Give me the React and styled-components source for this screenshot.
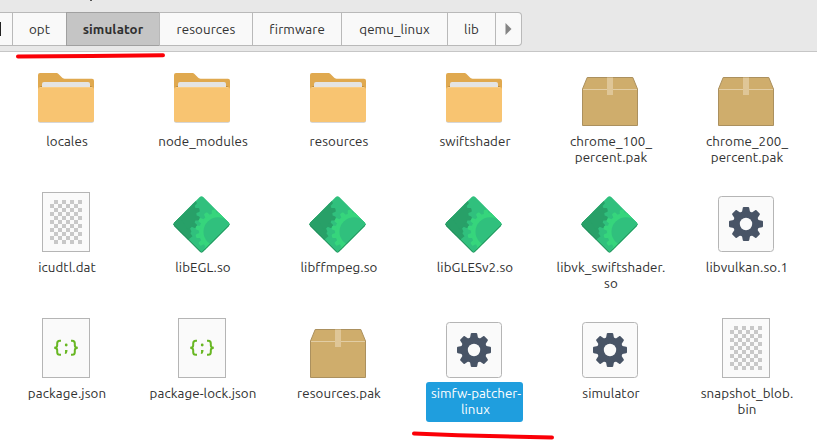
import React from 'react';
import styled, { createGlobalStyle } from 'styled-components';

const GlobalStyle = createGlobalStyle`
  * { box-sizing: border-box; }
  body {
    margin: 0;
    background: #fff;
    overflow: hidden;
    font-family: Ubuntu, "Noto Sans", sans-serif;
    font-size: 13.333px;
    letter-spacing: 0.1px;
    color: #303030;
  }
`;

const Window = styled.div`
  position: relative;
  width: 817px;
  height: 447px;
  overflow: hidden;
  background: #fff;
`;

const Toolbar = styled.header`
  height: 52px;
  padding-top: 12px;
  background: #e8e8e8;
  border-bottom: 1px solid #c6c6c6;
`;

const PathBar = styled.nav`
  display: flex;
  width: 522px;
  height: 34px;
  background: #f9f9f9;
  border: 1px solid #b9b9b9;
  border-left: 0;
  border-radius: 0 4px 4px 0;
`;

const Crumb = styled.div`
  display: flex;
  flex: none;
  align-items: center;
  justify-content: center;
  width: ${(p) => p.$width}px;
  margin: ${(p) => (p.$active ? '-1px 0' : '0')};
  border-left: 1px solid ${(p) => (p.$active ? '#a0a0a0' : '#b9b9b9')};
  border-top: ${(p) => (p.$active ? '1px solid #a0a0a0' : '0')};
  border-bottom: ${(p) => (p.$active ? '1px solid #a0a0a0' : '0')};
  background: ${(p) => (p.$active ? '#c5c5c5' : 'transparent')};
  font-weight: ${(p) => (p.$active ? 700 : 400)};
`;

const DriveEdge = styled.div`
  width: 12px;
  padding-top: 9px;

  &::before {
    content: '';
    display: block;
    width: 1px;
    height: 14px;
    background: #222;
  }
`;

const Files = styled.main`
  display: grid;
  grid-template-columns: repeat(6, 136px);
  grid-auto-rows: 126px;
  padding: 14px 0 0;
  margin-left: -2px;
`;

const File = styled.div`
  display: flex;
  flex-direction: column;
  align-items: center;
`;

const Label = styled.div`
  width: ${(p) => (p.$selected ? '97px' : 'auto')};
  margin-left: ${(p) => (p.$selected ? '1px' : '0')};
  padding: 4px 3px 4px 5px;
  border-radius: 3px;
  line-height: 16px;
  text-align: center;
  white-space: nowrap;
  letter-spacing: ${(p) => (p.$selected ? '0.02px' : 'inherit')};
  color: ${(p) => (p.$selected ? '#fff' : 'inherit')};
  background: ${(p) => (p.$selected ? '#1f9ede' : 'transparent')};
`;

const Line = styled.span`
  display: block;
`;

const Icon = styled.svg`
  display: block;
  flex: none;
  width: 64px;
  height: 64px;
`;

const Marks = styled.svg`
  position: absolute;
  inset: 0;
  width: 817px;
  height: 447px;
  pointer-events: none;
`;

const Folder = () => (
  <Icon viewBox="0 0 64 64">
    <path d="M6 56.8h52a2 2 0 0 0 2-2v-2H4v2a2 2 0 0 0 2 2z" fill="#c9c9c9" />
    <path d="M4 9a2 2 0 0 1 2-2h16c1.200 0 1.800.3 2.500 1l3.500 3.500c.7.700 1.300 1.200 2.500 1.200H58a2 2 0 0 1 2 2V25H4z" fill="#e0a94f" />
    <path d="M4 24c0-1.500 1-2.500 2.500-2.500h51c1.500 0 2.500 1 2.500 2.500v-1.500L57 20H7l-3 2.500z" fill="#b78a42" />
    <path d="M8 23v-5a2 2 0 0 1 2-2h44a2 2 0 0 1 2 2v5z" fill="#e4e4e4" />
    <rect x="4" y="21" width="56" height="35" rx="2" fill="#f8c471" />
    <path d="M6 21.500h52" stroke="#f9cd86" />
  </Icon>
);

const Package = () => (
  <Icon viewBox="0 0 64 64">
    <path d="M9.200 11.500h45.600L59.500 23v36.500h-55V23z" fill="#cfad6c" stroke="#ab905e" strokeLinejoin="round" />
    <path d="M5 23.500h54" stroke="#e2cda4" />
    <path d="M29 11h6v18h-6z" fill="#dfc697" />
    <path d="M29 11.500h6" stroke="#c4aa78" />
  </Icon>
);

const Page = () => (
  <rect x="8.500" y=".5" width="47" height="59" fill="#fafafa" stroke="#b5b5b5" />
);

const cells = Array.from({ length: 44 }, (_, i) => {
  const row = Math.floor(i / 4);
  return { x: 16 + (i % 4) * 8 + (row % 2 ? 0 : 4), y: 8 + row * 4 };
});

const Binary = () => (
  <Icon viewBox="0 0 64 64">
    <Page />
    {cells.map((c) => (
      <rect key={`${c.x}-${c.y}`} x={c.x} y={c.y} width="4" height="4" fill="#c8c8c8" />
    ))}
  </Icon>
);

const Json = () => (
  <Icon viewBox="0 0 64 64">
    <Page />
    <g fill="none" stroke="#68b723" strokeWidth="2">
      <path d="M27 22.800h-1.200c-1.800 0-2.600.8-2.600 2.500v2c0 1.700-.8 2.500-3 2.500 2.200 0 3 .8 3 2.500v2c0 1.700.8 2.500 2.600 2.500H27" />
      <path d="M37 22.800h1.200c1.800 0 2.600.8 2.600 2.500v2c0 1.700.8 2.500 3 2.500-2.200 0-3 .8-3 2.500v2c0 1.700-.8 2.500-2.600 2.500H37" />
    </g>
    <circle cx="32.200" cy="27" r="1.400" fill="#68b723" />
    <path d="M31 32h2.500c0 1.800-.5 3-1.500 4l-1.300-.6c.4-.9.500-1.900.3-3.400z" fill="#68b723" />
  </Icon>
);

const Gear = () => (
  <Icon viewBox="0 0 64 64">
    <rect x="4.500" y="4.500" width="55" height="55" rx="3" fill="#fafafa" stroke="#b5b5b5" />
    <g fill="#485466">
      {[0, 45, 90, 135, 180, 225, 270, 315].map((a) => (
        <path key={a} transform={`rotate(${a} 32 32)`} d="M27.800 21l1-5.200c.1-.5.400-.8.900-.8h4.600c.5 0 .8.300.9.800l1 5.200z" />
      ))}
      <circle cx="32" cy="32" r="13" />
    </g>
    <circle cx="32" cy="32" r="6.200" fill="#fafafa" />
  </Icon>
);

const teeth = Array.from({ length: 16 }, (_, i) => i * 22.5 + 11);

const Cog = ({ x, y, fill }) => (
  <g fill={fill} transform={`translate(${x} ${y})`}>
    <circle r="19" />
    {teeth.map((a) => (
      <path key={a} transform={`rotate(${a})`} d="M-2.700-18l.7-3.700q.2-.8 1-.8h2q.8 0 1 .8l.7 3.700z" />
    ))}
  </g>
);

const Library = ({ id }) => (
  <Icon viewBox="0 0 64 64">
    <defs>
      <clipPath id={id}>
        <rect x="11.500" y="11.500" width="41" height="41" rx="2.500" transform="rotate(45 32 32)" />
      </clipPath>
    </defs>
    <g transform="translate(-.5 .3)">
      <g clipPath={`url(#${id})`}>
        <path d="M0 0h64v64H0z" fill="#30c07d" />
        <Cog x={8} y={22} fill="#28a068" />
        <path d="M0 32L8 22l15 22-10 8z" fill="#28a068" />
        <Cog x={48.500} y={39.500} fill="#36d57c" />
        <circle cx="48.500" cy="39.500" r="14.500" fill="#30c07d" />
        <path d="M2.500 31.500L32 61l29.500-29.500" fill="none" stroke="#258a5a" strokeWidth="1.600" />
      </g>
    </g>
  </Icon>
);

const icons = { folder: Folder, package: Package, binary: Binary, json: Json, gear: Gear, library: Library };

const crumbs = [
  { name: 'opt', width: 54 },
  { name: 'simulator', width: 93, active: true },
  { name: 'resources', width: 93 },
  { name: 'firmware', width: 89 },
  { name: 'qemu_linux', width: 106 },
  { name: 'lib', width: 48 },
];

const files = [
  { icon: 'folder', lines: ['locales'] },
  { icon: 'folder', lines: ['node_modules'] },
  { icon: 'folder', lines: ['resources'] },
  { icon: 'folder', lines: ['swiftshader'] },
  { icon: 'package', lines: ['chrome_100_', 'percent.pak'] },
  { icon: 'package', lines: ['chrome_200_', 'percent.pak'] },
  { icon: 'binary', lines: ['icudtl.dat'] },
  { icon: 'library', lines: ['libEGL.so'] },
  { icon: 'library', lines: ['libffmpeg.so'] },
  { icon: 'library', lines: ['libGLESv2.so'] },
  { icon: 'library', lines: ['libvk_swiftshader.', 'so'] },
  { icon: 'gear', lines: ['libvulkan.so.1'] },
  { icon: 'json', lines: ['package.json'] },
  { icon: 'json', lines: ['package-lock.json'] },
  { icon: 'package', lines: ['resources.pak'] },
  { icon: 'gear', lines: ['simfw-patcher-', 'linux'], selected: true },
  { icon: 'gear', lines: ['simulator'] },
  { icon: 'binary', lines: ['snapshot_blob.', 'bin'] },
];

export default function App() {
  return (
    <Window>
      <GlobalStyle />
      <Toolbar>
        <PathBar>
          <DriveEdge />
          {crumbs.map((c) => (
            <Crumb key={c.name} $width={c.width} $active={c.active}>{c.name}</Crumb>
          ))}
          <Crumb $width={26}>
            <svg width="7" height="12" viewBox="0 0 7 12"><path d="M.5 0L6.500 6l-6 6z" fill="#848484" /></svg>
          </Crumb>
        </PathBar>
      </Toolbar>
      <Files>
        {files.map((f, i) => {
          const Art = icons[f.icon];
          return (
            <File key={i}>
              <Art id={`library-${i}`} />
              <Label $selected={f.selected}>
                {f.lines.map((l) => <Line key={l}>{l}</Line>)}
              </Label>
            </File>
          );
        })}
      </Files>
      <Marks viewBox="0 0 817 447">
        <path d="M90 0h2v1h-2z" fill="#555" />
        <path d="M18 56.500L91 56l72-.7M414 433.500l44 1.700 94 2.300" fill="none" stroke="#fb0007" strokeWidth="4" strokeLinecap="round" strokeLinejoin="round" />
      </Marks>
    </Window>
  );
}
